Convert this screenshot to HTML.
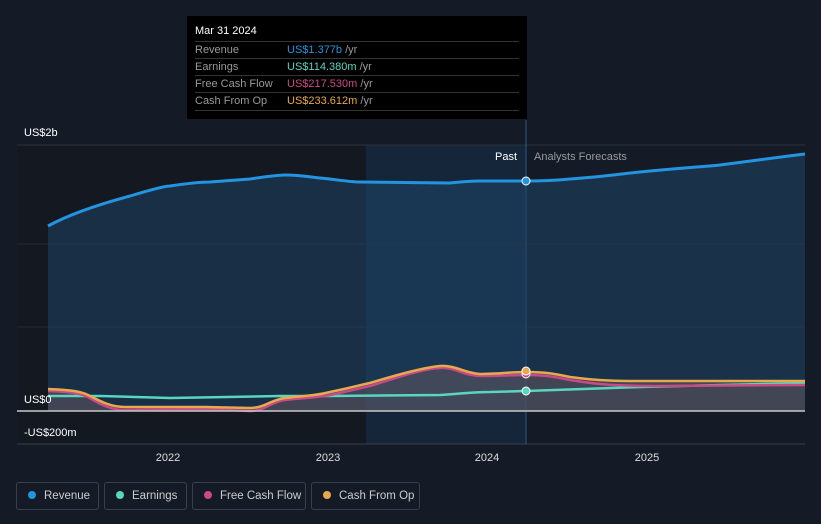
<!DOCTYPE html>
<html><head><style>
body{margin:0;background:#151b26;font-family:"Liberation Sans",sans-serif;}
.wrap{position:relative;width:821px;height:524px;overflow:hidden;background:#151b26}
.tt{position:absolute;left:187px;top:16px;width:340px;height:103px;background:#000;}
.tt .d{position:absolute;left:8px;top:9px;color:#fff;font-size:11px}
.row{position:absolute;left:8px;width:324px;height:17px;border-top:1px solid #333;font-size:11px;color:#999;line-height:17px}
.row span{position:absolute;left:92px}
.leg{position:absolute;top:482px;height:28px;border:1px solid #3a404b;border-radius:3px;color:#ccc;font-size:11.5px;line-height:27px;box-sizing:border-box;white-space:nowrap;overflow:hidden}
.leg i{display:inline-block;width:8px;height:8px;border-radius:50%;margin:0 8px 0 11px;vertical-align:0}
</style></head><body><div class="wrap">
<svg width="821" height="524" style="position:absolute;left:0;top:0">
<rect x="17" y="145" width="349" height="299" fill="#131821"/>
<rect x="366" y="145" width="160" height="299" fill="#16263a"/>
<line x1="17" y1="145" x2="805" y2="145" stroke="#2c323c"/>
<line x1="17" y1="244" x2="805" y2="244" stroke="#262c36"/>
<line x1="17" y1="327" x2="805" y2="327" stroke="#262c36"/>
<line x1="17" y1="444" x2="805" y2="444" stroke="#3a404a"/>
<line x1="526" y1="120" x2="526" y2="444" stroke="#2a5a85"/>
<path d="M48,226 C70,214 100,204 130,196 C150,190 165,186 170,186 C190,183 200,182 210,182 L250,179 C270,176 280,175 285,175 C300,175 310,177 320,178 C340,180 350,182 360,182 L450,183 C460,182 470,181 480,181 L526,181 C550,181 560,180 570,179 C600,177 620,174 640,172 C680,168 700,167 720,165 C760,160 780,157 805,154 L805,411 L48,411Z" fill="#1e4466" fill-opacity="0.55"/>
<path d="M48,226 C70,214 100,204 130,196 C150,190 165,186 170,186 C190,183 200,182 210,182 L250,179 C270,176 280,175 285,175 C300,175 310,177 320,178 C340,180 350,182 360,182 L450,183 C460,182 470,181 480,181 L526,181 C550,181 560,180 570,179 C600,177 620,174 640,172 C680,168 700,167 720,165 C760,160 780,157 805,154" fill="none" stroke="#2394e0" stroke-width="3"/>
<path d="M48,389 C70,390 80,391 88,395 C100,401 110,407 125,407 L205,407 L250,408 C265,408 270,400 285,398 C300,396 315,396 330,392 C350,388 360,385 370,383 C390,377 420,368 440,366 C455,365 465,373 480,374 C500,374 510,372 526,372 C550,372 560,375 570,377 C600,381 620,381 640,381 L805,381 L805,411 L48,411Z" fill="#6a5a5f" fill-opacity="0.5"/>
<path d="M48,396 L100,396 L170,398 L280,396 L330,396 L440,395 C460,394 470,392 490,392 L526,391 L640,387 L805,383" fill="none" stroke="#58d6c0" stroke-width="2.5"/>
<path d="M48,391 C70,392 80,393 88,397 C100,404 110,410 125,410 L205,409 L250,411 C265,411 270,402 285,400 C300,398 315,398 330,395 C350,391 360,388 370,386 C390,380 420,369 440,368 C455,367 465,376 480,376 C500,376 510,375 526,375 C550,375 560,378 570,380 C600,385 620,386 660,386 L805,385" fill="none" stroke="#c84a86" stroke-width="2.5"/>
<path d="M48,389 C70,390 80,391 88,395 C100,401 110,407 125,407 L205,407 L250,408 C265,408 270,400 285,398 C300,396 315,396 330,392 C350,388 360,385 370,383 C390,377 420,368 440,366 C455,365 465,373 480,374 C500,374 510,372 526,372 C550,372 560,375 570,377 C600,381 620,381 640,381 L805,381" fill="none" stroke="#e8a84e" stroke-width="2.5"/>
<line x1="17" y1="411" x2="805" y2="411" stroke="#c8c8c8" stroke-width="1.5"/>
<circle cx="526" cy="181" r="4" fill="#2394e0" stroke="#fff" stroke-width="1"/>
<circle cx="526" cy="374" r="4" fill="#c84a86" stroke="#fff" stroke-width="1"/>
<circle cx="526" cy="371" r="4" fill="#e8a84e" stroke="#fff" stroke-width="1"/>
<circle cx="526" cy="391" r="4" fill="#58d6c0" stroke="#fff" stroke-width="1"/>
<g font-size="11" fill="#fff">
<text x="24" y="136">US$2b</text>
<text x="24" y="403">US$0</text>
<text x="24" y="436">-US$200m</text>
<text x="495" y="160">Past</text>
<text x="534" y="160" fill="#999">Analysts Forecasts</text>
<text x="168" y="461" text-anchor="middle" fill="#ddd">2022</text>
<text x="328" y="461" text-anchor="middle" fill="#ddd">2023</text>
<text x="487" y="461" text-anchor="middle" fill="#ddd">2024</text>
<text x="647" y="461" text-anchor="middle" fill="#ddd">2025</text>
</g>
</svg>
<div class="tt"><div class="d">Mar 31 2024</div>
<div class="row" style="top:25px">Revenue<span style="color:#2394e0">US$1.377b <b style="color:#999;font-weight:normal">/yr</b></span></div>
<div class="row" style="top:42px">Earnings<span style="color:#58d6c0">US$114.380m <b style="color:#999;font-weight:normal">/yr</b></span></div>
<div class="row" style="top:59px">Free Cash Flow<span style="color:#c84a86">US$217.530m <b style="color:#999;font-weight:normal">/yr</b></span></div>
<div class="row" style="top:76px;border-bottom:1px solid #333">Cash From Op<span style="color:#e8a84e">US$233.612m <b style="color:#999;font-weight:normal">/yr</b></span></div>
</div>
<div class="leg" style="left:16px;width:83px"><i style="background:#2394e0"></i>Revenue</div>
<div class="leg" style="left:104px;width:83px"><i style="background:#58d6c0"></i>Earnings</div>
<div class="leg" style="left:192px;width:114px"><i style="background:#c84a86"></i>Free Cash Flow</div>
<div class="leg" style="left:311px;width:109px"><i style="background:#e8a84e"></i>Cash From Op</div>
</div></body></html>
